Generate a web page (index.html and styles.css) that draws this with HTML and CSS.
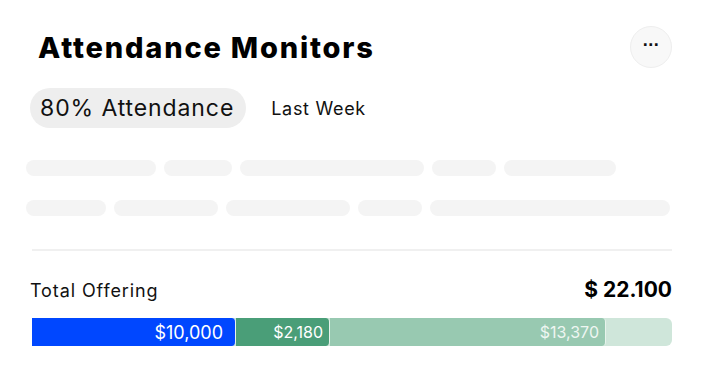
FILE: index.html
```html
<html>

<head>
    <meta name="viewport" content="width=device-width, initial-scale=1.0">
    <link rel="stylesheet" href="styles.css">
</head>

<body>
    <div class="card">
        <div class="header">
            <h1 class="title">Attendance Monitors</h1>
            <button class="more">&middot;&middot;&middot;</button>
        </div>

        <div class="meta">
            <span class="pill">80% Attendance</span>
            <span class="period">Last Week</span>
        </div>

        <div class="skeleton">
            <div class="line">
                <span style="width: 130px"></span>
                <span style="width: 68px"></span>
                <span style="width: 184px"></span>
                <span style="width: 64px"></span>
                <span style="width: 112px"></span>
            </div>
            <div class="line">
                <span style="width: 80px"></span>
                <span style="width: 104px"></span>
                <span style="width: 124px"></span>
                <span style="width: 64px"></span>
                <span style="width: 240px"></span>
            </div>
        </div>

        <div class="divider"></div>

        <div class="total">
            <span class="label">Total Offering</span>
            <span class="amount">$ 22.100</span>
        </div>

        <div class="bar">
            <div class="seg _0" style="width: 204px">$10,000</div>
            <div class="seg _1" style="width: 94px">$2,180</div>
            <div class="seg _2" style="width: 276px">$13,370</div>
        </div>
    </div>
</body>

</html>
```

FILE: styles.css
```css
body {
    margin: 0;
    background: #ffffff;
    font-family: "Inter", "Noto Sans", sans-serif;
    color: #111111;
}

.card {
    width: 642px;
    padding: 26px 32px 0 30px;
}

.header {
    display: flex;
    justify-content: space-between;
    align-items: center;
    height: 42px;
}

.title {
    margin: 0 0 0 8px;
    font-size: 29px;
    font-weight: 800;
    letter-spacing: 1.8px;
    color: #000000;
}

.more {
    width: 42px;
    height: 42px;
    border-radius: 50%;
    border: 1px solid #eeeeee;
    background: #f8f8f8;
    font-size: 18px;
    font-weight: 700;
    line-height: 1;
    color: #111111;
    padding: 0 0 5px;
    letter-spacing: -0.5px;
}

.meta {
    display: flex;
    align-items: center;
    gap: 25px;
    margin-top: 20px;
}

.pill {
    display: flex;
    align-items: center;
    height: 40px;
    padding: 0 12px 0 10px;
    border-radius: 20px;
    background: #eeeeee;
    font-size: 23px;
    letter-spacing: 0.9px;
    color: #111111;
}

.period {
    font-size: 18px;
    letter-spacing: 0.7px;
    color: #111111;
}

.skeleton {
    display: flex;
    flex-direction: column;
    gap: 24px;
    margin: 32px 0 0 -4px;
}

.line {
    display: flex;
    gap: 8px;
}

.line span {
    height: 16px;
    border-radius: 8px;
    background: #f4f4f4;
}

.divider {
    height: 2px;
    background: #f0f0f0;
    margin: 33px 0 0 2px;
}

.total {
    display: flex;
    justify-content: space-between;
    align-items: baseline;
    margin-top: 26px;
}

.label {
    font-size: 18px;
    letter-spacing: 0.9px;
    color: #111111;
}

.amount {
    font-size: 21px;
    font-weight: 700;
    color: #000000;
}

.bar {
    display: flex;
    height: 28px;
    margin: 16px 0 0 2px;
    border-radius: 0 6px 6px 0;
    background: #cfe6da;
}

.seg {
    display: flex;
    justify-content: flex-end;
    align-items: center;
    padding-right: 6px;
    box-sizing: border-box;
    border-radius: 0 4px 4px 0;
    border-right: 1px solid #e8f3ec;
    color: #ffffff;
}

._0 {
    background: #0047ff;
    font-size: 18px;
    padding-right: 12px;
}

._1 {
    background: #4a9e78;
    font-size: 16px;
}

._2 {
    background: #98c9b1;
    font-size: 16px;
    color: #eef6f1;
}
```
